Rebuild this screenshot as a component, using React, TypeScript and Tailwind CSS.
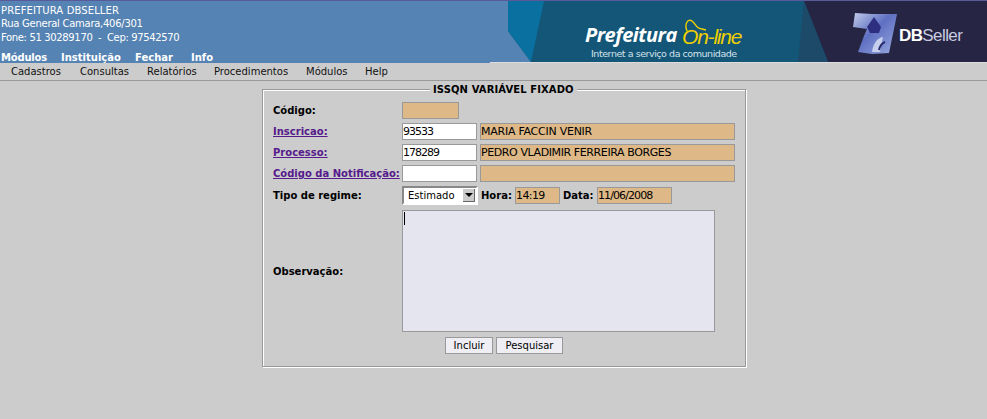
function Banner() {
  return (
    <svg width="497" height="61" viewBox="490 1 497 61" className="block">
      <defs>
        <linearGradient id="lg1" x1="0" y1="0" x2="1" y2="1">
          <stop offset="0" stopColor="#c2cdea" />
          <stop offset="0.45" stopColor="#5f6fc2" />
          <stop offset="1" stopColor="#9aabe0" />
        </linearGradient>
        <filter id="soft"><feGaussianBlur stdDeviation="0.5" /></filter>
      </defs>
      <polygon points="508,1 987,1 987,62 531,62 508,31" fill="#135678" />
      <polygon points="508,1 544,1 531,62 508,31" fill="#09709f" />
      <polygon points="804,1 987,1 987,62 828,62" fill="#262544" />
      <polygon points="804,1 828,62 798,62" fill="#1c4a68" />
      <g filter="url(#soft)">
        <path d="M855 13 L872 14 L897 14 L895 24 L889 53 L872 54 L858 52 L864 36 L867 29 L853 27 Z" fill="url(#lg1)" />
        <path d="M867 27 L874 17 L881 27 L879 33 L870 33 Z" fill="#2e2f80" />
        <path d="M872 52 C873 44 877 38 883 37 L880 52 Z" fill="#c6d0ec" />
        <path d="M879 50 C880 46 882 43 885 42" stroke="#2a2e6c" strokeWidth="2" fill="none" />
      </g>
      <path d="M687 31 C684 24 688 18 692 21 C696 24 696 29 702 29 L706 30" stroke="#f0d000" strokeWidth="1.4" fill="none" />
    </svg>
  );
}

function Inp({ v, cls }: { v?: string; cls: string }) {
  return (
    <div className={`h-[17px] border border-[#999] text-[11px] leading-[15px] text-black whitespace-nowrap overflow-hidden ${cls}`}>{v}</div>
  );
}

function Label({ children, link }: { children: string; link?: boolean }) {
  return (
    <div className={`w-[129px] shrink-0 text-[10px] font-bold whitespace-nowrap ${link ? "text-[#551a8b] underline" : "text-black"}`}>{children}</div>
  );
}

export default function App() {
  return (
    <div className="w-[987px] h-[419px] bg-[#cccccc] overflow-hidden font-['DejaVu_Sans',sans-serif]">
      <div className="h-[63px] bg-[#5583b3] border-t border-[#5a5a9a] relative text-white">
        <div className="pl-px text-[10px] leading-[13.3px] pt-[3px] whitespace-pre">
          <div className="tracking-[0.12px]">PREFEITURA DBSELLER</div>
          <div className="tracking-[-0.27px]">Rua General Camara,406/301</div>
          <div className="tracking-[-0.35px]">Fone: 51 30289170  -  Cep: 97542570</div>
        </div>
        <div className="flex pl-px mt-[7px] text-[10px] font-bold leading-[13px]">
          <span className="w-[60px] tracking-[-0.2px]">Módulos</span>
          <span className="w-[74px]">Instituição</span>
          <span className="w-[56px]">Fechar</span>
          <span>Info</span>
        </div>
        <div className="absolute top-0 right-0 border-b border-[#ddd]">
          <Banner />
          <div className="absolute left-[95px] top-[22px] text-[20px] leading-[24px] font-bold italic text-white tracking-[-0.5px] font-['Open_Sans',sans-serif]">Prefeitura</div>
          <div className="absolute left-[192px] top-[25px] text-[21px] leading-[22px] italic text-[#f0d000] tracking-[-1.2px] font-['Liberation_Sans',sans-serif]">On-line</div>
          <div className="absolute left-[101px] top-[47px] text-[9.5px] leading-[11px] text-[#d5e2ea] tracking-[-0.45px] whitespace-nowrap">Internet a serviço da comunidade</div>
          <div className="absolute left-[409px] top-[25px] text-[17px] leading-[20px] text-[#c9cce0] tracking-[-0.6px] whitespace-nowrap font-['Liberation_Sans',sans-serif]"><b className="text-white">DB</b>Seller</div>
        </div>
      </div>
      <div className="h-[18px] border-b border-[#999] flex items-center pl-[11px] text-[10px] text-[#111]">
        <span className="w-[69px]">Cadastros</span>
        <span className="w-[67px]">Consultas</span>
        <span className="w-[67px]">Relatórios</span>
        <span className="w-[92px]">Procedimentos</span>
        <span className="w-[59px]">Módulos</span>
        <span>Help</span>
      </div>
      <div className="pl-[262px]">
        <div className="mt-[8px] w-[484px] h-[278px] border border-[#999] shadow-[inset_1px_1px_0_#fff,1px_1px_0_#fff] relative pt-[12px] pl-[9px]">
          <div className="absolute left-[167px] -top-[7px] bg-[#cccccc] px-[3px] text-[10px] leading-[13px] font-bold text-black whitespace-nowrap tracking-[0.1px]">ISSQN VARIÁVEL FIXADO</div>
          <div className="flex items-center h-[17px] pl-px">
            <Label>Código:</Label>
            <Inp cls="w-[57px] bg-[#deb887]" />
          </div>
          <div className="flex items-center h-[17px] mt-[4px] pl-px">
            <Label link>Inscricao:</Label>
            <Inp v="93533" cls="w-[75px] bg-white tracking-[-1px]" />
            <Inp v="MARIA FACCIN VENIR" cls="w-[255px] ml-[3px] bg-[#deb887] tracking-[-0.25px]" />
          </div>
          <div className="flex items-center h-[17px] mt-[4px] pl-px">
            <Label link>Processo:</Label>
            <Inp v="178289" cls="w-[75px] bg-white tracking-[-1px]" />
            <Inp v="PEDRO VLADIMIR FERREIRA BORGES" cls="w-[255px] ml-[3px] bg-[#deb887] tracking-[-0.4px]" />
          </div>
          <div className="flex items-center h-[17px] mt-[4px] pl-px">
            <Label link>Código da Notificação:</Label>
            <Inp cls="w-[75px] bg-white" />
            <Inp cls="w-[255px] ml-[3px] bg-[#deb887]" />
          </div>
          <div className="flex items-center h-[19px] mt-[4px] pl-px">
            <Label>Tipo de regime:</Label>
            <div className="w-[76px] h-[19px] border-2 border-[#888] border-r-white border-b-white bg-white flex items-center justify-between pl-[4px] pr-px text-[10px] text-black">
              <span>Estimado</span>
              <span className="w-[12px] h-[13px] bg-[#ccc] flex items-center justify-center border-r border-b border-[#666]">
                <span className="w-0 h-0 border-x-[4px] border-x-transparent border-t-[4px] border-t-black" />
              </span>
            </div>
            <span className="ml-[3px] text-[10px] font-bold text-black w-[34px]">Hora:</span>
            <Inp v="14:19" cls="w-[45px] bg-[#deb887] tracking-[-0.6px]" />
            <span className="ml-[3px] text-[10px] font-bold text-black w-[34px]">Data:</span>
            <Inp v="11/06/2008" cls="w-[75px] bg-[#deb887] tracking-[-0.9px]" />
          </div>
          <div className="flex items-center mt-[5px] pl-px">
            <Label>Observação:</Label>
            <div className="w-[313px] h-[122px] border border-[#999] bg-[#e5e5f0] relative">
              <div className="absolute left-px top-px w-px h-[13px] bg-black" />
            </div>
          </div>
          <div className="flex mt-[5px] ml-[173px] gap-[3px]">
            <div className="w-[48px] h-[17px] border border-[#999] bg-[#eeeef4] text-[10px] leading-[15px] text-black text-center">Incluir</div>
            <div className="w-[67px] h-[17px] border border-[#999] bg-[#eeeef4] text-[10px] leading-[15px] text-black text-center">Pesquisar</div>
          </div>
        </div>
      </div>
    </div>
  );
}
